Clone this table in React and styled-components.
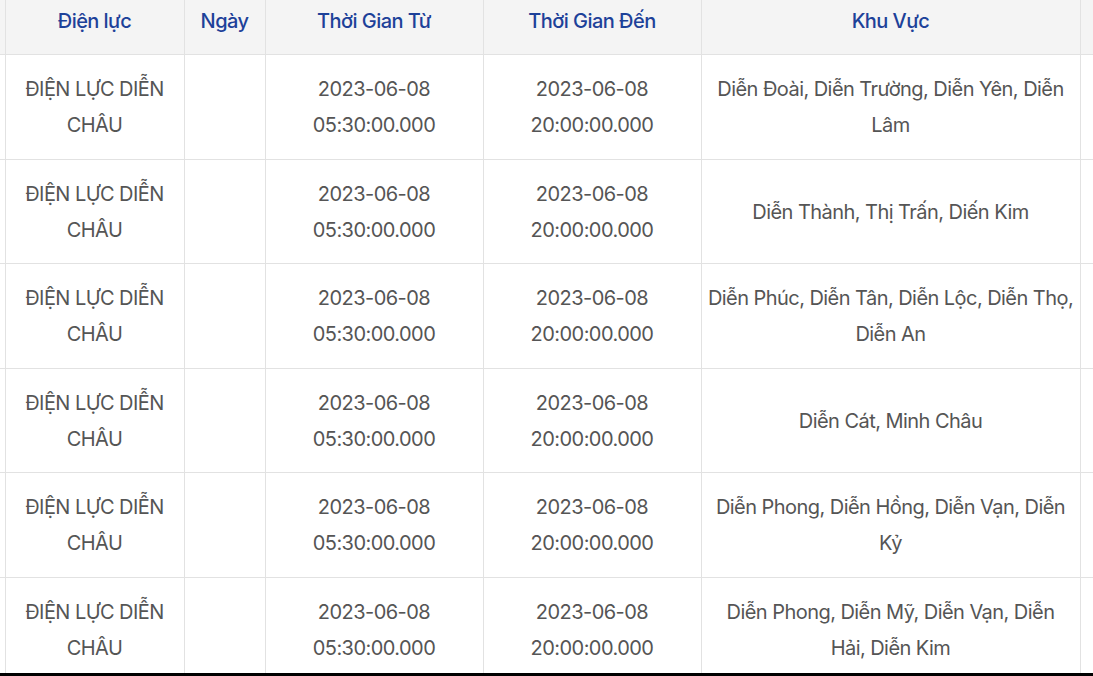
import React from "react";
import styled, { createGlobalStyle } from "styled-components";

const Global = createGlobalStyle`
  html, body { margin: 0; padding: 0; background: #fff; }
  body { font-family: Inter, "Noto Sans", sans-serif; }
`;

const Frame = styled.div`
  width: 1093px;
  height: 673px;
  overflow: hidden;
  border-bottom: 3px solid #000;
  background: #fff;
`;

const Table = styled.table`
  border-collapse: collapse;
  table-layout: fixed;
  width: 1200px;
  font-family: Inter, "Noto Sans", sans-serif;
  font-size: 20px;
  line-height: 36px;
  letter-spacing: -0.55px;
`;

const Th = styled.th`
  background: #f4f4f4;
  color: #1d4199;
  font-weight: 500;
  text-align: center;
  vertical-align: top;
  padding: ${(p) => (p.$edge ? "0" : "3px 12px 15px")};
  border: 1px solid #e2e2e2;
  border-top: none;
  ${(p) => p.$edge && "border-left: none;"}
  white-space: nowrap;
  overflow: hidden;
`;

const Td = styled.td`
  color: #555;
  text-align: center;
  vertical-align: middle;
  padding: ${(p) => (p.$edge ? "0" : `16px ${p.$px ?? 12}px 15.5px`)};
  border: 1px solid #e2e2e2;
  ${(p) => p.$edge && "border-left: none;"}
  overflow: hidden;
`;

const cols = [5, 179, 81, 218, 218, 379, 120];

const areas = [
  "Diễn Đoài, Diễn Trường, Diễn Yên, Diễn Lâm",
  "Diễn Thành, Thị Trấn, Diến Kim",
  "Diễn Phúc, Diễn Tân, Diễn Lộc, Diễn Thọ, Diễn An",
  "Diễn Cát, Minh Châu",
  "Diễn Phong, Diễn Hồng, Diễn Vạn, Diễn Kỷ",
  "Diễn Phong, Diễn Mỹ, Diễn Vạn, Diễn Hải, Diễn Kim",
];

export default function App() {
  return (
    <>
      <Global />
      <Frame>
        <Table>
          <colgroup>
            {cols.map((w, i) => (
              <col key={i} style={{ width: w }} />
            ))}
          </colgroup>
          <thead>
            <tr>
              <Th $edge />
              <Th>Điện lực</Th>
              <Th>Ngày</Th>
              <Th>Thời Gian Từ</Th>
              <Th>Thời Gian Đến</Th>
              <Th>Khu Vực</Th>
              <Th />
            </tr>
          </thead>
          <tbody>
            {areas.map((a, i) => (
              <tr key={i}>
                <Td $edge />
                <Td>ĐIỆN LỰC DIỄN CHÂU</Td>
                <Td />
                <Td>2023-06-08 05:30:00.000</Td>
                <Td>2023-06-08 20:00:00.000</Td>
                <Td $px={6}>{a}</Td>
                <Td />
              </tr>
            ))}
          </tbody>
        </Table>
      </Frame>
    </>
  );
}
